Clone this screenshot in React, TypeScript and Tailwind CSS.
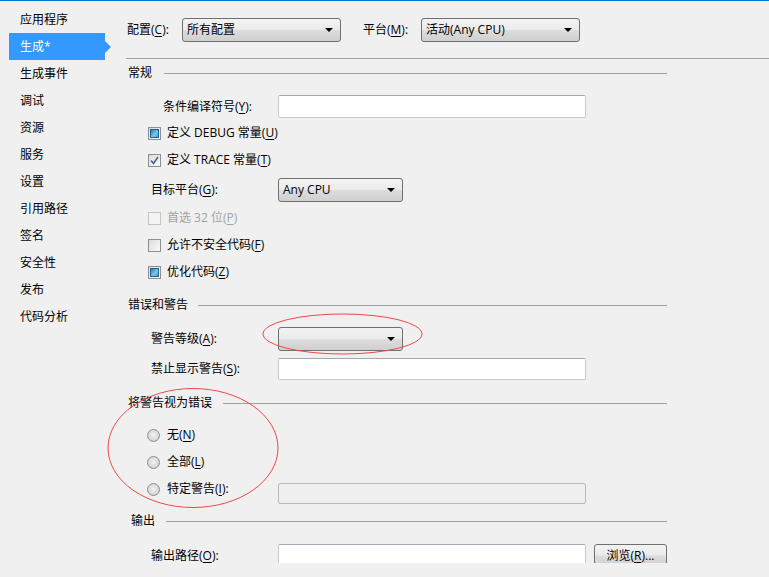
import React from 'react';

const navItems = ['应用程序', '生成*', '生成事件', '调试', '资源', '服务', '设置', '引用路径', '签名', '安全性', '发布', '代码分析'];

const comboBg =
  'bg-[linear-gradient(to_bottom,#f3f3f3_0%,#ebebeb_48%,#dddddd_52%,#cfcfcf_100%)]';

const Key: React.FC<{ k: string }> = ({ k }) => (
  <>
    (<span className="underline underline-offset-2">{k}</span>)
  </>
);

const Combo: React.FC<{ value?: string; width: string }> = ({ value, width }) => (
  <div
    className={`${width} h-[24px] flex items-center justify-between rounded-[3px] border border-[#707070] ${comboBg} pl-[4px] pr-[7px]`}
  >
    <span>{value}</span>
    <span className="w-0 h-0 border-x-[4px] border-x-transparent border-t-[4px] border-t-black" />
  </div>
);

const TextBox: React.FC<{ h?: string; disabled?: boolean }> = ({ h = 'h-[22px]', disabled }) => (
  <div
    className={`w-[308px] ${h} rounded-[2px] border ${
      disabled ? 'bg-[#f0f0f0] border-[#b9b9b9]' : 'bg-white border-[#c7cad0] border-t-[#a4a7ad]'
    }`}
  />
);

const SectionHeader: React.FC<{ title: string; gap: string; indent?: string; mt: string }> = ({ title, gap, indent = 'pl-[2px]', mt }) => (
  <div className={`${mt} h-[20px] w-[541px] flex items-center ${indent}`}>
    <span>{title}</span>
    <div className={`${gap} flex-1 h-px bg-[#a0a0a0]`} />
  </div>
);

type CheckState = 'filled' | 'checked' | 'empty' | 'disabled';

const CheckBox: React.FC<{ state: CheckState }> = ({ state }) => (
  <div
    className={`w-[13px] h-[13px] border flex items-center justify-center ${
      state === 'disabled'
        ? 'border-[#c5c5c5] bg-[#f4f4f4]'
        : 'border-[#8e8f8f] bg-[linear-gradient(135deg,#dcdcdc,#f9f9f9)]'
    }`}
  >
    {state === 'filled' && (
      <div className="w-[9px] h-[9px] border border-[#25618f] bg-[linear-gradient(135deg,#2b7cb5,#7cc7ec_60%,#3b96cf)]" />
    )}
    {state === 'checked' && (
      <svg width="9" height="9" viewBox="0 0 9 9">
        <path d="M1 4.5 L3.5 7.5 L8 1" fill="none" stroke="#4a5f94" strokeWidth="1.6" />
      </svg>
    )}
  </div>
);

const CheckRow: React.FC<{ state: CheckState; mt: string; children: React.ReactNode }> = ({ state, mt, children }) => (
  <div className={`${mt} h-[20px] flex items-center pl-[22px]`}>
    <CheckBox state={state} />
    <span className={`ml-[6px] ${state === 'disabled' ? 'text-[#a3a3a3]' : ''}`}>{children}</span>
  </div>
);

const Radio: React.FC = () => (
  <div className="w-[13px] h-[13px] rounded-full border border-[#8e8f8f] bg-[radial-gradient(circle_at_50%_45%,#f4f4f4_0%,#d8d8d8_60%,#c4c4c4_100%)]" />
);

const App: React.FC = () => {
  return (
    <div className="w-[769px] h-[577px] bg-[#f0f0f0] overflow-hidden text-[12px] text-black font-['Open_Sans','Noto_Sans_CJK_SC',sans-serif] relative">
      <div className="h-px bg-[#0078d7]" />
      <div className="flex">
        {/* sidebar */}
        <div className="w-[126px] pt-[5px]">
          {navItems.map((item) =>
            item === '生成*' ? (
              <div key={item} className="h-[27px] flex items-center">
                <div className="ml-[9px] w-[96px] h-[27px] bg-[#3399ff] text-white flex items-center pl-[11px]">
                  {item}
                </div>
                <div className="w-0 h-0 border-y-[6px] border-y-transparent border-l-[6px] border-l-[#3399ff]" />
              </div>
            ) : (
              <div key={item} className="h-[27px] flex items-center pl-[20px]">
                {item}
              </div>
            )
          )}
        </div>

        {/* main */}
        <div className="flex-1 h-[562px] overflow-hidden">
          <div className="mt-[17px] h-[24px] flex items-center pl-px">
            <span className="w-[55px]">配置<Key k="C" />:</span>
            <Combo value="所有配置" width="w-[159px]" />
            <span className="ml-[22px] w-[58px]">平台<Key k="M" />:</span>
            <Combo value="活动(Any CPU)" width="w-[159px]" />
          </div>
          <div className="mt-[16px] h-px bg-[#a0a0a0]" />

          <SectionHeader title="常规" gap="ml-[12px]" mt="mt-[4px]" />
          <div className="mt-[12px] h-[23px] flex items-center">
            <span className="w-[152px] pl-[37px]">条件编译符号<Key k="Y" />:</span>
            <TextBox h="h-[23px]" />
          </div>
          <CheckRow state="filled" mt="mt-[5px]">定义 DEBUG 常量<Key k="U" /></CheckRow>
          <CheckRow state="checked" mt="mt-[7px]">定义 TRACE 常量<Key k="T" /></CheckRow>
          <div className="mt-[8px] h-[24px] flex items-center">
            <span className="w-[152px] pl-[25px]">目标平台<Key k="G" />:</span>
            <Combo value="Any CPU" width="w-[125px]" />
          </div>
          <CheckRow state="disabled" mt="mt-[6px]">首选 32 位<Key k="P" /></CheckRow>
          <CheckRow state="empty" mt="mt-[7px]">允许不安全代码<Key k="F" /></CheckRow>
          <CheckRow state="filled" mt="mt-[7px]">优化代码<Key k="Z" /></CheckRow>

          <SectionHeader title="错误和警告" gap="ml-[10px]" mt="mt-[13px]" />
          <div className="mt-[12px] h-[24px] flex items-center">
            <span className="w-[152px] pl-[25px]">警告等级<Key k="A" />:</span>
            <Combo width="w-[125px]" />
          </div>
          <div className="mt-[7px] h-[22px] flex items-center">
            <span className="w-[152px] pl-[25px]">禁止显示警告<Key k="S" />:</span>
            <TextBox />
          </div>

          <SectionHeader title="将警告视为错误" gap="ml-[11px]" mt="mt-[13px]" />
          <div className="mt-[12px] h-[20px] flex items-center pl-[21px]">
            <Radio />
            <span className="ml-[7px]">无<Key k="N" /></span>
          </div>
          <div className="mt-[7px] h-[20px] flex items-center pl-[21px]">
            <Radio />
            <span className="ml-[7px]">全部<Key k="L" /></span>
          </div>
          <div className="mt-[7px] h-[25px] flex items-start">
            <div className="w-[152px] h-[20px] flex items-center pl-[21px]">
              <Radio />
              <span className="ml-[7px]">特定警告<Key k="I" />:</span>
            </div>
            <div className="mt-[4px]">
              <TextBox h="h-[21px]" disabled />
            </div>
          </div>

          <SectionHeader title="输出" gap="ml-[11px]" indent="pl-[5px]" mt="mt-[7px]" />
          <div className="mt-[13px] h-[23px] flex items-center">
            <span className="w-[152px] pl-[25px]">输出路径<Key k="O" />:</span>
            <TextBox h="h-[23px]" />
            <div
              className={`ml-[8px] w-[73px] h-[23px] rounded-[3px] border border-[#707070] ${comboBg} flex items-center justify-center`}
            >
              浏览<Key k="R" />...
            </div>
          </div>
        </div>
      </div>

      {/* red annotation ellipses */}
      <svg className="absolute left-0 top-0 pointer-events-none" width="769" height="577">
        <ellipse cx="342.5" cy="334" rx="79.5" ry="20" fill="none" stroke="#f04848" strokeWidth="1" />
        <ellipse cx="193" cy="448" rx="85" ry="59.5" fill="none" stroke="#f04848" strokeWidth="1" />
      </svg>
    </div>
  );
};

export default App;
